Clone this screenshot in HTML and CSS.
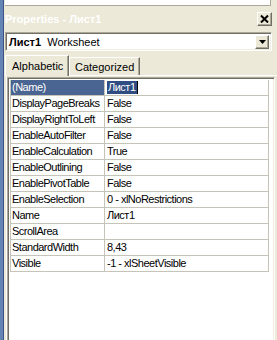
FILE: index.html
```html
<!DOCTYPE html>
<html>
<head>
<meta charset="utf-8">
<link rel="stylesheet" href="styles.css">
</head>
<body>
<div class="app">
  <div class="strip"></div>
  <div class="main">
    <div class="topbox"></div>
    <div class="titlebar">
      <span class="title">Properties - Лист1</span>
      <span class="close">
        <svg width="9" height="8" viewBox="0 0 9 8"><path d="M1 0.5 L8 7.5 M8 0.5 L1 7.5" stroke="#000" stroke-width="2"/></svg>
      </span>
    </div>
    <div class="combo">
      <span class="combo-text"><b>Лист1</b>&nbsp; Worksheet</span>
      <span class="combo-btn">
        <svg width="7" height="4" viewBox="0 0 7 4"><path d="M0 0 H7 L3.5 4 Z" fill="#000"/></svg>
      </span>
    </div>
    <div class="tabs">
      <div class="tab active">Alphabetic</div>
      <div class="tab">Categorized</div>
    </div>
    <div class="panel">
      <div class="grid">
        <div class="row sel"><div class="k">(Name)</div><div class="v"><span class="selt">Лист1</span><span class="caret"></span></div></div>
        <div class="row"><div class="k">DisplayPageBreaks</div><div class="v">False</div></div>
        <div class="row"><div class="k">DisplayRightToLeft</div><div class="v">False</div></div>
        <div class="row"><div class="k">EnableAutoFilter</div><div class="v">False</div></div>
        <div class="row"><div class="k">EnableCalculation</div><div class="v">True</div></div>
        <div class="row"><div class="k">EnableOutlining</div><div class="v">False</div></div>
        <div class="row"><div class="k">EnablePivotTable</div><div class="v">False</div></div>
        <div class="row"><div class="k">EnableSelection</div><div class="v">0 - xlNoRestrictions</div></div>
        <div class="row"><div class="k">Name</div><div class="v">Лист1</div></div>
        <div class="row"><div class="k">ScrollArea</div><div class="v"></div></div>
        <div class="row"><div class="k">StandardWidth</div><div class="v">8,43</div></div>
        <div class="row"><div class="k">Visible</div><div class="v">-1 - xlSheetVisible</div></div>
        <div class="fill"></div>
      </div>
    </div>
  </div>
</div>
</body>
</html>
```
FILE: styles.css
```css
* { box-sizing: border-box; }
html, body { margin: 0; padding: 0; }
body {
  background: #ece9d8;
  font-family: "Liberation Sans", Arial, sans-serif;
  font-size: 11px;
  color: #000;
  width: 277px;
  height: 340px;
  overflow: hidden;
}
.app { display: flex; height: 340px; }
.strip {
  width: 4px;
  background: #6584b6;
  border-right: 1px solid #3b5385;
  flex: none;
}
.main {
  flex: 1;
  display: flex;
  flex-direction: column;
  padding-left: 1px;
}
.topbox {
  height: 6px;
  margin-right: 6px;
  background: #fff;
  border-bottom: 1px solid #aca899;
  border-right: 1px solid #aca899;
}
.titlebar {
  height: 26px;
  display: flex;
  align-items: center;
  justify-content: space-between;
  padding-right: 5px;
}
.title {
  color: #fff;
  font-weight: bold;
  font-size: 11px;
  margin-top: -1px;
}
.close {
  width: 15px;
  height: 14px;
  display: flex;
  align-items: center;
  justify-content: center;
  background: #ece9d8;
  border-top: 1px solid #fff;
  border-left: 1px solid #fff;
  border-right: 1px solid #716f64;
  border-bottom: 1px solid #716f64;
  box-shadow: inset -1px -1px 0 #aca899;
}
.combo {
  height: 19px;
  margin-right: 5px;
  background: #fff;
  border-top: 1px solid #aca899;
  border-left: 1px solid #aca899;
  border-right: 1px solid #fff;
  border-bottom: 1px solid #fff;
  box-shadow: inset 1px 1px 0 #716f64, inset -1px -1px 0 #f1efe2;
  display: flex;
  align-items: center;
  justify-content: space-between;
  padding: 2px;
}
.combo-text { padding-left: 1px; white-space: pre; }
.combo-btn {
  width: 14px;
  height: 14px;
  background: #ece9d8;
  border-top: 1px solid #fff;
  border-left: 1px solid #fff;
  border-right: 1px solid #716f64;
  border-bottom: 1px solid #716f64;
  box-shadow: inset -1px -1px 0 #aca899;
  display: flex;
  align-items: center;
  justify-content: center;
}
.tabs {
  margin-top: 4px;
  height: 20px;
  display: flex;
  align-items: flex-end;
  padding-left: 0;
  position: relative;
  z-index: 1;
}
.tab {
  height: 18px;
  padding: 0 5px;
  display: flex;
  align-items: center;
  border-top: 1px solid #fff;
  border-left: 1px solid #fff;
  border-right: 1px solid #716f64;
  box-shadow: inset -1px 0 0 #aca899;
  background: #ece9d8;
}
.tab.active {
  height: 21px;
  margin-bottom: -1px;
  padding: 0 5px 1px 6px;
  width: 64px;
}
.panel {
  flex: 1;
  margin-left: 1px;
  border-top: 1px solid #fff;
  border-left: 1px solid #fff;
  padding-top: 1px;
}
.grid {
  height: 100%;
  width: 268px;
  background: #fff;
  border-top: 1px solid #aca899;
  border-left: 1px solid #aca899;
  border-right: 1px solid #fff;
  box-shadow: inset 1px 1px 0 #716f64, inset -1px 0 0 #f1efe2;
  padding: 2px 5px 0 2px;
  display: flex;
  flex-direction: column;
  letter-spacing: -0.5px;
}
.row {
  height: 16px;
  display: flex;
  border-bottom: 1px solid #c6c3b8;
  border-left: 1px solid #c6c3b8;
  border-right: 1px solid #c6c3b8;
  flex: none;
}
.k {
  width: 94px;
  border-right: 1px solid #c6c3b8;
  padding-left: 1px;
  line-height: 15px;
  white-space: nowrap;
  overflow: hidden;
}
.v {
  flex: 1;
  padding-left: 2px;
  line-height: 15px;
  white-space: nowrap;
  display: flex;
  align-items: center;
}
.row.sel .k { background: #4b6592; color: #fff; }
.selt { background: #2f4d82; color: #fff; padding: 0 1px; line-height: 13px; }
.caret { width: 1px; height: 13px; background: #000; }
.fill { flex: 1; }
```
